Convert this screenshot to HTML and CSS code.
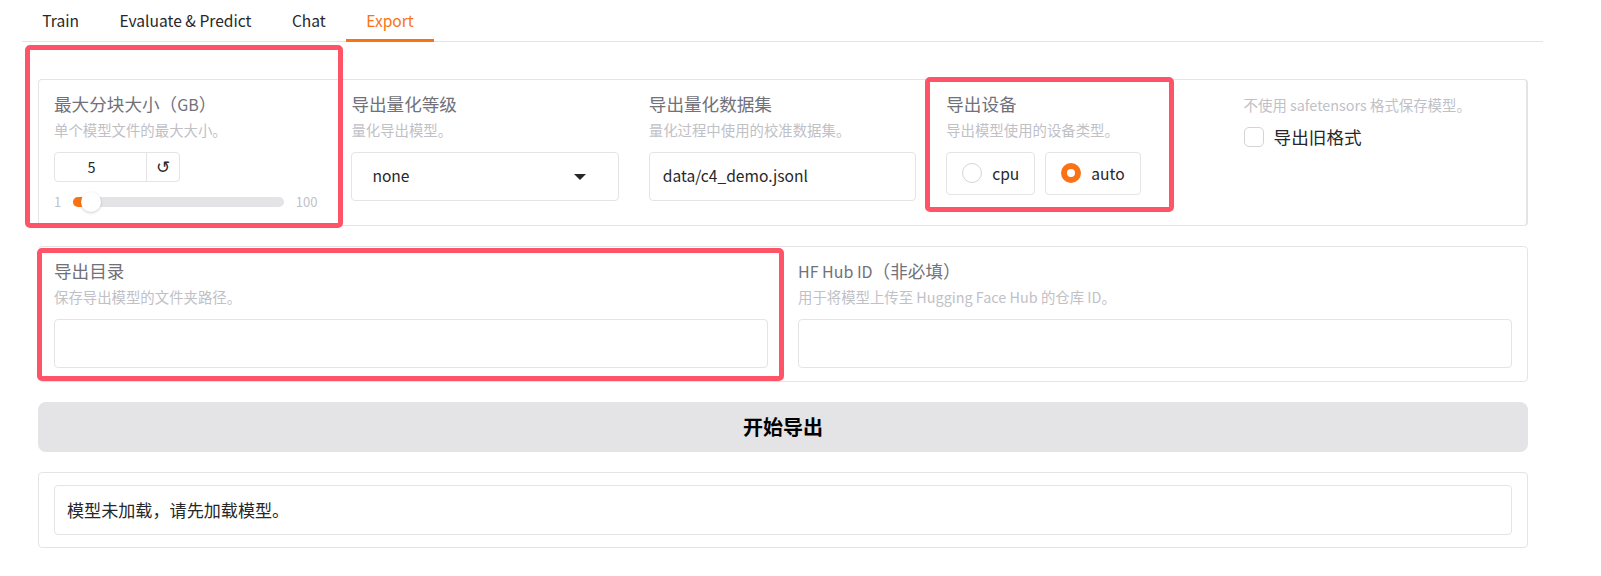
FILE: index.html
```html
<!DOCTYPE html>
<html lang="zh-CN">
  <head>
    <meta charset="UTF-8" />
    <meta name="viewport" content="width=device-width, initial-scale=1.0" />
    <title>Export</title>
    <link rel="stylesheet" href="styles.css">
  </head>
  <body>
    <div class="page">
      <div class="tabs">
        <button class="tab">Train</button>
        <button class="tab">Evaluate &amp; Predict</button>
        <button class="tab">Chat</button>
        <button class="tab selected">Export</button>
      </div>

      <div class="content">
        <div class="panel row-five">
          <div class="block">
            <div class="label">最大分块大小（<span class="latin">GB</span>）</div>
            <div class="info">单个模型文件的最大大小。</div>
            <div class="number-box">
              <div class="number-value">5</div>
              <div class="number-reset">↺</div>
            </div>
            <div class="slider">
              <span class="slider-end">1</span>
              <div class="track">
                <div class="track-fill"></div>
                <div class="thumb"></div>
              </div>
              <span class="slider-end">100</span>
            </div>
          </div>

          <div class="block">
            <div class="label">导出量化等级</div>
            <div class="info">量化导出模型。</div>
            <div class="field select">
              <span>none</span>
              <span class="arrow"></span>
            </div>
          </div>

          <div class="block">
            <div class="label">导出量化数据集</div>
            <div class="info">量化过程中使用的校准数据集。</div>
            <div class="field">data/c4_demo.jsonl</div>
          </div>

          <div class="block">
            <div class="label">导出设备</div>
            <div class="info">导出模型使用的设备类型。</div>
            <div class="radios">
              <div class="radio"><span class="dot"></span>cpu</div>
              <div class="radio"><span class="dot checked"></span>auto</div>
            </div>
          </div>

          <div class="block">
            <div class="info first">不使用 safetensors 格式保存模型。</div>
            <div class="check-row">
              <span class="checkbox"></span>
              <span class="check-label">导出旧格式</span>
            </div>
          </div>
        </div>

        <div class="panel row-two">
          <div class="block">
            <div class="label">导出目录</div>
            <div class="info">保存导出模型的文件夹路径。</div>
            <div class="field"></div>
          </div>
          <div class="block">
            <div class="label"><span class="latin">HF Hub ID</span>（非必填）</div>
            <div class="info">用于将模型上传至 Hugging Face Hub 的仓库 ID。</div>
            <div class="field"></div>
          </div>
        </div>

        <button class="start">开始导出</button>

        <div class="panel output">
          <div class="field">模型未加载，请先加载模型。</div>
        </div>
      </div>

      <!-- annotations drawn over the screenshot -->
      <div class="mark mark-size"></div>
      <div class="mark mark-device"></div>
      <div class="mark mark-dir"></div>
    </div>
  </body>
</html>
```

FILE: styles.css
```css
* {
  box-sizing: border-box;
}
body {
  margin: 0;
  background-color: #fff;
  font-family: "Noto Sans CJK SC", "Noto Sans", sans-serif;
  color: #27272a;
}
.page {
  position: relative;
  padding: 0 57px 0 22px;
}
.tabs {
  display: flex;
  height: 42px;
  margin-right: 1px;
  border-bottom: 1px solid #e4e4e7;
}
.tab {
  height: 42px;
  padding: 0 20.25px;
  border: none;
  border-bottom: 3px solid transparent;
  background: none;
  font-family: inherit;
  font-size: 15.6px;
  color: #27272a;
}
.tab.selected {
  color: #f97316;
  border-bottom-color: #f97316;
}
.content {
  display: flex;
  flex-direction: column;
  padding: 37px 16px 0;
  gap: 20px;
}
.panel {
  border: 1px solid #e4e4e7;
  border-radius: 4px;
}
.row-five {
  display: grid;
  grid-template-columns: repeat(5, 1fr);
  height: 147px;
  border-right-width: 2px;
}
.row-two {
  display: grid;
  grid-template-columns: repeat(2, 1fr);
  height: 136px;
}
.block {
  padding: 10px 15px;
}
.label {
  margin-bottom: 2px;
  font-size: 17.6px;
  line-height: 27px;
  color: #71717a;
}
.latin {
  font-size: 16px;
  line-height: 1;
}
.info {
  margin-bottom: 11px;
  font-size: 14.4px;
  line-height: 22px;
  color: #bfc1c7;
}
.info.first {
  margin: 4px 0 0;
}
.field {
  display: flex;
  align-items: center;
  height: 49px;
  padding: 0 13px 3px;
  border: 1px solid #e4e4e7;
  border-radius: 4px;
  font-size: 15.6px;
}
.select {
  justify-content: space-between;
  padding: 0 32px 3px 20px;
}
.arrow {
  width: 0;
  height: 0;
  margin-top: 3px;
  border-left: 6px solid transparent;
  border-right: 6px solid transparent;
  border-top: 6px solid #27272a;
}
.number-box {
  display: flex;
  width: 126px;
  height: 30px;
  border: 1px solid #e4e4e7;
  border-radius: 4px;
  font-size: 14.4px;
  line-height: 28px;
  text-align: center;
}
.number-value {
  flex: 1;
  padding-right: 18px;
}
.number-reset {
  width: 33px;
  border-left: 1px solid #e4e4e7;
  font-family: "DejaVu Sans", sans-serif;
  font-size: 17px;
}
.slider {
  display: flex;
  align-items: center;
  gap: 12px;
  margin-top: 10px;
  padding-right: 4px;
}
.slider-end {
  font-size: 13px;
  color: #bfc1c7;
}
.track {
  position: relative;
  flex: 1;
  height: 10px;
  border-radius: 5px;
  background-color: #e4e4e7;
}
.track-fill {
  width: 14px;
  height: 10px;
  border-radius: 5px;
  background-color: #f97316;
}
.thumb {
  position: absolute;
  left: 8px;
  top: -5px;
  width: 20px;
  height: 20px;
  border-radius: 50%;
  background-color: #fff;
  box-shadow: 0 1px 3px rgba(0, 0, 0, 0.2);
}
.radios {
  display: flex;
  gap: 10px;
}
.radio {
  display: flex;
  align-items: center;
  gap: 10px;
  height: 43px;
  padding: 0 15px 2px;
  border: 1px solid #e4e4e7;
  border-radius: 4px;
  font-size: 15.6px;
}
.dot {
  width: 20px;
  height: 20px;
  border: 1px solid #d4d4d8;
  border-radius: 50%;
}
.dot.checked {
  border: 6px solid #f97316;
}
.check-row {
  display: flex;
  align-items: center;
  gap: 10px;
  margin-top: 10px;
}
.checkbox {
  width: 20px;
  height: 20px;
  border: 1px solid #d4d4d8;
  border-radius: 5px;
}
.check-label {
  font-size: 17.6px;
  line-height: 22px;
}
.start {
  height: 50px;
  padding-bottom: 2px;
  border: none;
  border-radius: 8px;
  background-color: #e4e4e7;
  font-family: inherit;
  font-size: 20px;
  font-weight: 700;
  color: #000;
}
.output {
  height: 76px;
  padding: 12px 15px;
}
.output .field {
  height: 50px;
  padding: 0 12px 1px;
  font-size: 17.1px;
}
.mark {
  position: absolute;
  border: 5px solid #ff5468;
  border-radius: 5px;
}
.mark-size {
  left: 25px;
  top: 45px;
  width: 318px;
  height: 183px;
}
.mark-device {
  left: 925px;
  top: 77px;
  width: 249px;
  height: 135px;
}
.mark-dir {
  left: 37px;
  top: 248px;
  width: 747px;
  height: 133px;
}
```
